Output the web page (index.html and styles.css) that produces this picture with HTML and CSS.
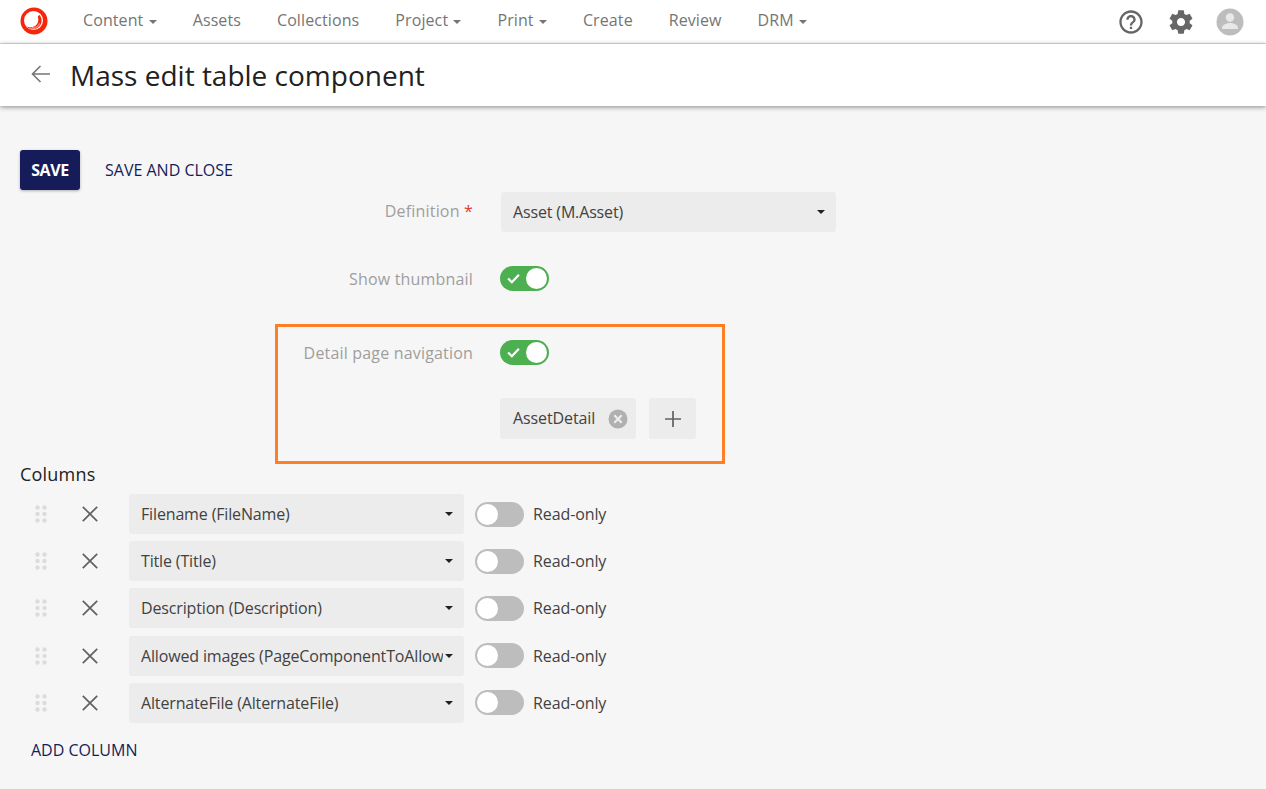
FILE: index.html
```html
<!DOCTYPE html>
<html lang="en">
<head>
  <meta charset="UTF-8">
  <title>Mass edit table component</title>
  <link rel="stylesheet" href="styles.css">
</head>
<body>

  <header class="topbar">
    <svg class="logo" width="28" height="28" viewBox="0 0 28 28">
      <circle cx="14" cy="14" r="13.500" fill="#f5260c"/>
      <circle cx="13.500" cy="13.500" r="9.500" fill="#fff"/>
      <path d="M6.500 19.500c3 3 7.500 3.500 11 1.500 3-2 4.500-5 4-8.500-.3-2-1-3.500-2-4.500-.8.4-1.500 1-1.700 1.900 1.200 3.500.2 7-2.800 9-3 1.700-6 1.500-8.500.6z" fill="#f5260c"/>
      <path d="M9 21c4 1.500 8.500.5 10.500-3.500M12 20.500c3 .5 6-1 7.500-4.500" fill="none" stroke="#ffb3a6" stroke-width=".7"/>
    </svg>
    <nav class="nav">
      <a class="nav-item">Content <i class="caret"></i></a>
      <a class="nav-item">Assets</a>
      <a class="nav-item">Collections</a>
      <a class="nav-item">Project <i class="caret"></i></a>
      <a class="nav-item">Print <i class="caret"></i></a>
      <a class="nav-item">Create</a>
      <a class="nav-item">Review</a>
      <a class="nav-item">DRM <i class="caret"></i></a>
    </nav>
    <div class="top-icons">
      <svg class="help" width="28" height="28" viewBox="0 0 24 24" fill="#666">
        <path d="M11 18h2v-2h-2v2zm1-16C6.480 2 2 6.480 2 12s4.480 10 10 10 10-4.480 10-10S17.520 2 12 2zm0 18c-4.410 0-8-3.590-8-8s3.590-8 8-8 8 3.590 8 8-3.590 8-8 8zm0-14c-2.210 0-4 1.790-4 4h2c0-1.100.9-2 2-2s2 .9 2 2c0 2-3 1.750-3 5h2c0-2.250 3-2.500 3-5 0-2.210-1.790-4-4-4z"/>
      </svg>
      <svg width="28" height="28" viewBox="0 0 24 24" fill="#666">
        <path d="M19.430 12.980c.04-.32.070-.64.070-.98s-.03-.66-.07-.98l2.110-1.650c.19-.15.240-.42.120-.64l-2-3.460c-.12-.22-.39-.3-.61-.22l-2.490 1c-.52-.4-1.080-.73-1.690-.98l-.38-2.650C14.460 2.180 14.250 2 14 2h-4c-.25 0-.46.18-.49.420l-.38 2.650c-.61.25-1.170.59-1.690.98l-2.490-1c-.23-.09-.49 0-.61.22l-2 3.460c-.13.22-.07.49.12.64l2.110 1.650c-.04.32-.07.65-.07.98s.03.66.07.98l-2.110 1.650c-.19.15-.24.42-.12.64l2 3.460c.12.22.39.3.61.22l2.490-1c.52.4 1.080.73 1.690.98l.38 2.650c.03.24.24.42.49.42h4c.25 0 .46-.18.49-.42l.38-2.650c.61-.25 1.170-.59 1.690-.98l2.490 1c.23.09.49 0 .61-.22l2-3.460c.12-.22.07-.49-.12-.64l-2.110-1.650zM12 15.500c-1.930 0-3.500-1.570-3.500-3.500s1.570-3.500 3.500-3.500 3.500 1.570 3.500 3.500-1.570 3.500-3.500 3.500z"/>
      </svg>
      <svg width="28" height="28" viewBox="0 0 28 28">
        <circle cx="14" cy="14" r="13.500" fill="#bdbdbd"/>
        <circle cx="14" cy="9.500" r="4.200" fill="#e8e8e8"/>
        <path d="M6 20c0-3.500 5-5 8-5s8 1.500 8 5v1H6z" fill="#e8e8e8"/>
      </svg>
    </div>
  </header>

  <div class="titlebar">
    <svg class="back" width="24" height="24" viewBox="0 0 24 24" fill="none" stroke="#757575" stroke-width="1.600">
      <path d="M21 12H3.500M11.500 4l-8 8 8 8"/>
    </svg>
    <h1 class="page-title">Mass edit table component</h1>
  </div>

  <main class="content">
    <div class="actions">
      <button class="btn-save">SAVE</button>
      <button class="btn-link">SAVE AND CLOSE</button>
    </div>

    <div class="form-row row-definition">
      <label class="form-label">Definition <span class="req">*</span></label>
      <div class="select select-wide">Asset (M.Asset)<i class="caret caret-dark"></i></div>
    </div>

    <div class="form-row row-thumb">
      <label class="form-label">Show thumbnail</label>
      <span class="toggle on"><svg width="13" height="11" viewBox="0 0 12 10" fill="none" stroke="#fff" stroke-width="2"><path d="M1 5l3.500 3.500L11 1.500"/></svg><b></b></span>
    </div>

    <div class="form-row row-detail">
      <label class="form-label">Detail page navigation</label>
      <span class="toggle on"><svg width="13" height="11" viewBox="0 0 12 10" fill="none" stroke="#fff" stroke-width="2"><path d="M1 5l3.500 3.500L11 1.500"/></svg><b></b></span>
    </div>

    <div class="form-row row-chip">
      <span></span>
      <div class="chip-line">
        <span class="chip"><span class="chip-text">AssetDetail</span>
          <svg width="20" height="20" viewBox="0 0 20 20"><circle cx="10" cy="10" r="9.500" fill="#b0b0b0"/><path d="M6.300 6.300l7.400 7.400M13.700 6.300l-7.400 7.400" stroke="#eee" stroke-width="2.200"/></svg>
        </span>
        <span class="add-btn">
          <svg width="18" height="18" viewBox="0 0 18 18" stroke="#616161" stroke-width="1.700"><path d="M9 1v16M1 9h16"/></svg>
        </span>
      </div>
    </div>

    <div class="highlight"></div>

    <h2 class="columns-title">Columns</h2>

    <div class="col-row">
      <svg class="grip" width="12" height="18" viewBox="0 0 12 18" fill="#dcdcdc"><circle cx="2.500" cy="2.500" r="2.200"/><circle cx="9.500" cy="2.500" r="2.200"/><circle cx="2.500" cy="9" r="2.200"/><circle cx="9.500" cy="9" r="2.200"/><circle cx="2.500" cy="15.500" r="2.200"/><circle cx="9.500" cy="15.500" r="2.200"/></svg>
      <svg class="remove" width="16" height="16" viewBox="0 0 16 16" stroke="#616161" stroke-width="1.700"><path d="M.8 .8l14.400 14.400M15.200 .8L.8 15.200"/></svg>
      <div class="select">Filename (FileName)<i class="caret caret-dark"></i></div>
      <span class="toggle"><b></b></span>
      <span class="ro">Read-only</span>
    </div>
    <div class="col-row">
      <svg class="grip" width="12" height="18" viewBox="0 0 12 18" fill="#dcdcdc"><circle cx="2.500" cy="2.500" r="2.200"/><circle cx="9.500" cy="2.500" r="2.200"/><circle cx="2.500" cy="9" r="2.200"/><circle cx="9.500" cy="9" r="2.200"/><circle cx="2.500" cy="15.500" r="2.200"/><circle cx="9.500" cy="15.500" r="2.200"/></svg>
      <svg class="remove" width="16" height="16" viewBox="0 0 16 16" stroke="#616161" stroke-width="1.700"><path d="M.8 .8l14.400 14.400M15.200 .8L.8 15.200"/></svg>
      <div class="select">Title (Title)<i class="caret caret-dark"></i></div>
      <span class="toggle"><b></b></span>
      <span class="ro">Read-only</span>
    </div>
    <div class="col-row">
      <svg class="grip" width="12" height="18" viewBox="0 0 12 18" fill="#dcdcdc"><circle cx="2.500" cy="2.500" r="2.200"/><circle cx="9.500" cy="2.500" r="2.200"/><circle cx="2.500" cy="9" r="2.200"/><circle cx="9.500" cy="9" r="2.200"/><circle cx="2.500" cy="15.500" r="2.200"/><circle cx="9.500" cy="15.500" r="2.200"/></svg>
      <svg class="remove" width="16" height="16" viewBox="0 0 16 16" stroke="#616161" stroke-width="1.700"><path d="M.8 .8l14.400 14.400M15.200 .8L.8 15.200"/></svg>
      <div class="select">Description (Description)<i class="caret caret-dark"></i></div>
      <span class="toggle"><b></b></span>
      <span class="ro">Read-only</span>
    </div>
    <div class="col-row">
      <svg class="grip" width="12" height="18" viewBox="0 0 12 18" fill="#dcdcdc"><circle cx="2.500" cy="2.500" r="2.200"/><circle cx="9.500" cy="2.500" r="2.200"/><circle cx="2.500" cy="9" r="2.200"/><circle cx="9.500" cy="9" r="2.200"/><circle cx="2.500" cy="15.500" r="2.200"/><circle cx="9.500" cy="15.500" r="2.200"/></svg>
      <svg class="remove" width="16" height="16" viewBox="0 0 16 16" stroke="#616161" stroke-width="1.700"><path d="M.8 .8l14.400 14.400M15.200 .8L.8 15.200"/></svg>
      <div class="select"><span class="clip">Allowed images (PageComponentToAllowedImages)</span><i class="caret caret-dark"></i></div>
      <span class="toggle"><b></b></span>
      <span class="ro">Read-only</span>
    </div>
    <div class="col-row">
      <svg class="grip" width="12" height="18" viewBox="0 0 12 18" fill="#dcdcdc"><circle cx="2.500" cy="2.500" r="2.200"/><circle cx="9.500" cy="2.500" r="2.200"/><circle cx="2.500" cy="9" r="2.200"/><circle cx="9.500" cy="9" r="2.200"/><circle cx="2.500" cy="15.500" r="2.200"/><circle cx="9.500" cy="15.500" r="2.200"/></svg>
      <svg class="remove" width="16" height="16" viewBox="0 0 16 16" stroke="#616161" stroke-width="1.700"><path d="M.8 .8l14.400 14.400M15.200 .8L.8 15.200"/></svg>
      <div class="select">AlternateFile (AlternateFile)<i class="caret caret-dark"></i></div>
      <span class="toggle"><b></b></span>
      <span class="ro">Read-only</span>
    </div>

    <button class="btn-link btn-add">ADD COLUMN</button>
  </main>

</body>
</html>
```

FILE: styles.css
```css
html, body {
  margin: 0;
  padding: 0;
  height: 100%;
  overflow: hidden;
  font-family: "Open Sans", "Noto Sans", sans-serif;
  font-size: 16px;
  background-color: #f6f6f6;
  color: #424242;
}
.topbar {
  display: flex;
  align-items: center;
  height: 43px;
  padding: 0 20px;
  background: #fff;
  border-bottom: 1px solid #e0e0e0;
}
.logo {
  margin-right: 35px;
  margin-top: -1px;
}
.nav {
  display: flex;
  gap: 36px;
  margin-top: -3px;
  letter-spacing: 0.1px;
}
.nav-item {
  color: #757575;
  white-space: nowrap;
}
.caret {
  display: inline-block;
  width: 0;
  height: 0;
  margin-left: 1px;
  vertical-align: middle;
  border-top: 4px solid #757575;
  border-left: 4px solid transparent;
  border-right: 4px solid transparent;
}
.caret-dark {
  border-top-color: #212121;
  margin-left: auto;
  margin-right: -1px;
}
.top-icons {
  display: flex;
  align-items: center;
  gap: 21px;
  margin-left: auto;
  margin-right: 2px;
}
.help {
  margin-right: 1px;
}
.titlebar {
  display: flex;
  align-items: center;
  height: 62px;
  padding-left: 29px;
  background: #fff;
  box-shadow: 0 1px 5px rgba(0, 0, 0, 0.45);
  position: relative;
}
.back {
  margin-right: 17px;
  margin-top: -2px;
}
.page-title {
  margin: 0;
  font-size: 28px;
  font-weight: 400;
  color: #212121;
  line-height: 62px;
  margin-top: -1px;
}
.content {
  position: relative;
  padding: 44px 20px 0 20px;
}
.actions {
  display: flex;
  gap: 5px;
  height: 40px;
}
button {
  font-family: inherit;
  border: none;
}
.btn-save {
  width: 60px;
  height: 40px;
  background: #161c5a;
  color: #fff;
  font-size: 16px;
  font-weight: 700;
  letter-spacing: -0.4px;
  border-radius: 3px;
  padding: 0;
  box-shadow: 0 1px 3px rgba(0, 0, 0, 0.3);
}
.btn-link {
  background: none;
  color: #161c5a;
  font-size: 16px;
  padding: 0 20px;
}
.form-row {
  display: grid;
  grid-template-columns: 453px 1fr;
  column-gap: 27px;
  align-items: center;
}
.form-label {
  text-align: right;
  color: #9e9e9e;
  letter-spacing: 0.18px;
}
.req {
  color: #e53935;
}
.row-definition {
  margin-top: 2px;
  grid-template-columns: 453px 335px;
  column-gap: 28px;
}
.row-definition .form-label {
  margin-top: -2px;
}
.row-thumb {
  margin-top: 34px;
}
.row-detail {
  margin-top: 49px;
}
.row-chip {
  margin-top: 33px;
}
.select {
  display: flex;
  align-items: center;
  box-sizing: border-box;
  width: 335px;
  height: 40px;
  padding: 0 12px;
  background: #ececec;
  border-radius: 3px;
  color: #424242;
  white-space: nowrap;
  letter-spacing: -0.15px;
}
.clip {
  overflow: hidden;
  width: 302px;
  flex-shrink: 0;
}
.toggle {
  display: flex;
  align-items: center;
  box-sizing: border-box;
  width: 49px;
  height: 25px;
  padding: 0 2px;
  border-radius: 13px;
  background: #bdbdbd;
  flex-shrink: 0;
}
.toggle b {
  display: block;
  width: 21px;
  height: 21px;
  border-radius: 50%;
  background: #fff;
}
.toggle.on {
  background: #4caf50;
  justify-content: space-between;
  padding-left: 7px;
}
.col-row .toggle {
  margin-left: 11px;
}
.chip-line {
  display: flex;
  gap: 13px;
}
.chip {
  display: flex;
  align-items: center;
  justify-content: space-between;
  box-sizing: border-box;
  width: 136px;
  height: 41px;
  padding: 0 8px 0 13px;
  background: #ececec;
  border-radius: 3px;
  color: #424242;
  letter-spacing: -0.1px;
}
.chip-text {
  margin-top: -2px;
}
.add-btn {
  display: flex;
  align-items: center;
  justify-content: center;
  width: 47px;
  height: 41px;
  background: #ececec;
  border-radius: 3px;
}
.highlight {
  position: absolute;
  left: 275px;
  top: 218px;
  width: 450px;
  height: 140px;
  box-sizing: border-box;
  border: 3px solid #ff7f27;
}
.columns-title {
  margin: 23px 0 8px;
  font-size: 18px;
  font-weight: 400;
  color: #212121;
  line-height: 24px;
  letter-spacing: 0.2px;
}
.col-row {
  display: flex;
  align-items: center;
  margin-bottom: 7.200px;
}
.grip {
  margin-left: 15px;
}
.remove {
  margin-left: 35px;
  margin-right: 31px;
}
.ro {
  margin-left: 9px;
  color: #424242;
  letter-spacing: -0.1px;
}
.btn-add {
  display: block;
  margin-top: 3px;
  padding: 0 0 0 11px;
  height: 40px;
}
```
